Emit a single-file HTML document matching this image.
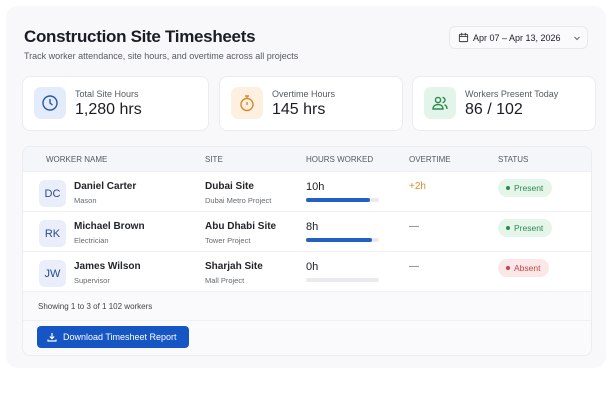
<!DOCTYPE html>
<html><head><style>
*{box-sizing:border-box;margin:0;padding:0}
body{width:612px;height:408px;background:#fff;font-family:"Liberation Sans",sans-serif;color:#1a1d24;position:relative;overflow:hidden}
.panel{position:absolute;left:6px;top:6px;width:600px;height:362px;background:#f8f8fa;border-radius:12px}
.abs{position:absolute}
.title{left:24px;top:27px;font-size:17px;font-weight:bold;letter-spacing:-0.3px}
.sub{left:24px;top:51px;font-size:9px;color:#555a63}
.date{left:449px;top:26px;width:139px;height:23px;border:1px solid #e8e9ee;border-radius:6px;background:#fafafc;font-size:9px;display:flex;align-items:center;padding-left:8px;gap:4px;white-space:nowrap}
.card{top:76px;height:55px;background:#fff;border:1px solid #ebecf0;border-radius:8px}
.ic{position:absolute;left:11px;top:10px;width:32px;height:32px;border-radius:7px;display:flex;align-items:center;justify-content:center}
.cl{position:absolute;left:52px;top:12px;font-size:9px;color:#555a63}
.cv{position:absolute;left:52px;top:24px;font-size:16px;color:#1a1d24}
.table{left:22px;top:146px;width:570px;height:210px;background:#fff;border:1px solid #ebecf0;border-radius:8px;overflow:hidden}
.th{position:absolute;top:0;left:0;right:0;height:24px;background:#f5f6f9;font-size:8px;color:#555a63}
.th span{position:absolute;top:8px}
.row{position:absolute;left:0;right:0;height:40px;border-top:1px solid #eef0f3}
.av{position:absolute;left:16px;top:8px;width:27px;height:27px;border-radius:6px;background:#e9eefa;color:#2a4a8c;font-size:11px;display:flex;align-items:center;justify-content:center}
.nm{position:absolute;left:51px;top:9px;font-size:10px;font-weight:bold;color:#22252b}
.rl{position:absolute;left:51px;top:24px;font-size:7.5px;color:#666b74}
.st{position:absolute;left:182px;top:9px;font-size:10px;font-weight:bold;color:#22252b}
.sp{position:absolute;left:182px;top:24px;font-size:7.5px;color:#666b74}
.hr{position:absolute;left:283px;top:9px;font-size:11px;color:#1a1d24}
.bar{position:absolute;left:283px;top:26px;width:73px;height:4px;border-radius:2px;background:#e8eaef}
.bar i{display:block;height:4px;border-radius:2px;background:#2360c4}
.ot{position:absolute;left:386px;top:9px;font-size:10px}
.pill{position:absolute;left:475px;top:7px;height:18px;border-radius:9px;font-size:8.5px;display:flex;align-items:center;padding:0 9px 0 8px;gap:4px}
.pill b{width:4px;height:4px;border-radius:2px;display:block}
.g{background:#e4f5e9;color:#2d8a4f}.g b{background:#2d8a4f}
.r{background:#fbe7e7;color:#c0464a}.r b{background:#c0464a}
.btn{left:37px;top:326px;width:152px;height:22px;background:#1656c4;border-radius:4px;color:#fff;font-size:9px;display:flex;align-items:center;padding-left:10px;gap:6px;white-space:nowrap}
</style></head><body>
<div class="panel"></div>
<div class="abs title">Construction Site Timesheets</div>
<div class="abs sub">Track worker attendance, site hours, and overtime across all projects</div>
<div class="abs date"><svg width="11" height="11" viewBox="0 0 12 12" fill="none" stroke="#333" stroke-width="1"><rect x="1.5" y="2.5" width="9" height="8" rx="1"/><path d="M1.5 5h9M4 1v3M8 1v3"/></svg><span>Apr 07 – Apr 13, 2026</span><svg style="margin-left:8px" width="8" height="8" viewBox="0 0 8 8" fill="none" stroke="#666" stroke-width="1"><path d="M1.5 3l2.5 2.5L6.5 3"/></svg></div>

<div class="abs card" style="left:22px;width:187px"><div class="ic" style="background:#e3ecfb"><svg width="18" height="18" viewBox="0 0 18 18" fill="none" stroke="#2a56a8" stroke-width="1.4"><circle cx="9" cy="9" r="7"/><path d="M9 5v4l2.5 2"/></svg></div><div class="cl">Total Site Hours</div><div class="cv">1,280 hrs</div></div>
<div class="abs card" style="left:219px;width:184px"><div class="ic" style="background:#fdf0e0"><svg width="18" height="18" viewBox="0 0 18 18" fill="none" stroke="#d88a2a" stroke-width="1.4"><circle cx="9" cy="10.5" r="6"/><path d="M7 2h4M9 2v2.5M9 8v3"/></svg></div><div class="cl">Overtime Hours</div><div class="cv">145 hrs</div></div>
<div class="abs card" style="left:412px;width:184px"><div class="ic" style="background:#e3f5ea"><svg width="18" height="18" viewBox="0 0 18 18" fill="none" stroke="#2d8a4f" stroke-width="1.4"><circle cx="7" cy="6" r="2.6"/><path d="M2 15c0-3 2.2-4.5 5-4.5s5 1.5 5 4.5zM11.5 3.5a2.5 2.5 0 010 5M13.5 10.8c1.5.5 2.5 1.8 2.5 4.2"/></svg></div><div class="cl">Workers Present Today</div><div class="cv">86 / 102</div></div>

<div class="abs table">
<div class="th"><span style="left:23px">WORKER NAME</span><span style="left:182px">SITE</span><span style="left:283px">HOURS WORKED</span><span style="left:386px">OVERTIME</span><span style="left:475px">STATUS</span></div>
<div class="row" style="top:24px"><div class="av">DC</div><div class="nm">Daniel Carter</div><div class="rl">Mason</div><div class="st">Dubai Site</div><div class="sp">Dubai Metro Project</div><div class="hr">10h</div><div class="bar"><i style="width:64px"></i></div><div class="ot" style="color:#d98c2b">+2h</div><div class="pill g"><b></b>Present</div></div>
<div class="row" style="top:64px"><div class="av">RK</div><div class="nm">Michael Brown</div><div class="rl">Electrician</div><div class="st">Abu Dhabi Site</div><div class="sp">Tower Project</div><div class="hr">8h</div><div class="bar"><i style="width:66px"></i></div><div class="ot" style="color:#666">—</div><div class="pill g"><b></b>Present</div></div>
<div class="row" style="top:104px"><div class="av">JW</div><div class="nm">James Wilson</div><div class="rl">Supervisor</div><div class="st">Sharjah Site</div><div class="sp">Mall Project</div><div class="hr">0h</div><div class="bar"></div><div class="ot" style="color:#666">—</div><div class="pill r"><b></b>Absent</div></div>
<div class="row" style="top:144px;height:30px;background:#fafafc"><div style="position:absolute;left:15px;top:10px;font-size:8px;color:#444">Showing 1 to 3 of 1 102 workers</div></div>
<div class="row" style="top:173px;background:#fafafc"></div>
</div>
<div class="abs btn"><svg width="10" height="10" viewBox="0 0 10 10" fill="none" stroke="#fff" stroke-width="1.2"><path d="M5 1v5.5M2.8 4.5L5 6.7l2.2-2.2M1 7.5v1.5h8V7.5"/></svg>Download Timesheet Report</div>
</body></html>
